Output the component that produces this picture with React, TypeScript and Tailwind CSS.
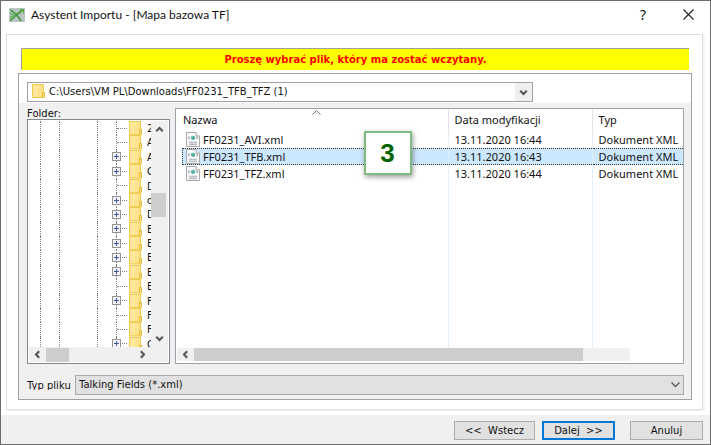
import React from "react";

const ui = "font-['Noto_Sans','Open_Sans',sans-serif]";

const folders = [
  { name: "2", plus: false },
  { name: "A", plus: false },
  { name: "A", plus: true },
  { name: "C", plus: true },
  { name: "D", plus: false },
  { name: "d", plus: true },
  { name: "D", plus: true },
  { name: "E", plus: true },
  { name: "E", plus: true },
  { name: "E", plus: true },
  { name: "E", plus: true },
  { name: "E", plus: false },
  { name: "F", plus: true },
  { name: "F", plus: false },
  { name: "F", plus: false },
  { name: "C", plus: true },
];

const files = [
  { name: "FF0231_AVI.xml", date: "13.11.2020 16:44", type: "Dokument XML", selected: false },
  { name: "FF0231_TFB.xml", date: "13.11.2020 16:43", type: "Dokument XML", selected: true },
  { name: "FF0231_TFZ.xml", date: "13.11.2020 16:44", type: "Dokument XML", selected: false },
];

function Chevron({ className = "", thin = false }: { className?: string; thin?: boolean }) {
  return (
    <svg className={className} width="9" height="9" viewBox="0 0 9 9" fill="none" stroke="#555" strokeWidth={thin ? 1.3 : 2.1} aria-hidden="true">
      <path d={thin ? "M0.5 2.5 4.5 6.5 8.5 2.5" : "M1.2 2.8 4.5 6 7.8 2.8"} />
    </svg>
  );
}

function FolderIcon() {
  return (
    <svg className="block h-full w-[13px] shrink-0" viewBox="0 0 13 14" preserveAspectRatio="none" aria-hidden="true">
      <path d="M0.5 0.5H11.5V8.5H12.5V13.5H0.5Z" fill="#ffe28c" stroke="#ecc94d" />
      <path d="M1 1H8L4 13H1Z" fill="#ffecaa" opacity=".5" />
      <path d="M10.5 13.5V8.5H12.5V13.5" fill="#ffe089" stroke="#e3bb38" />
    </svg>
  );
}

function XmlIcon() {
  return (
    <svg className="block shrink-0" width="14" height="15" viewBox="0 0 14 15" aria-hidden="true">
      <path d="M0.5 0.5H10L13.5 4V14.5H0.5Z" fill="#fafafa" stroke="#a8a8a8" />
      <path d="M10 0.5V4H13.5" fill="#fff" stroke="#a8a8a8" />
      <circle cx="7" cy="5.8" r="2" fill="#2f9c95" />
      <circle cx="6.5" cy="5.2" r="0.9" fill="#7fd6b0" />
      <path d="M3.4 4.6 2.4 5.8 3.4 7M10.6 4.6 11.6 5.8 10.6 7" fill="none" stroke="#67758f" />
      <path d="M3 10.5H11M3 12.5H11" stroke="#b9bcc6" strokeWidth="1.4" />
    </svg>
  );
}

function PlusBox() {
  return (
    <svg className="block" width="9" height="9" viewBox="0 0 9 9" aria-hidden="true">
      <rect x="0.5" y="0.5" width="8" height="8" fill="#f5f5f5" stroke="#949494" />
      <path d="M2 4.5H7M4.5 2V7" stroke="#3c59a8" />
    </svg>
  );
}

function TreeGuide({ className }: { className: string }) {
  return <span className={`${className} shrink-0 border-r border-dotted border-[#808080]`} />;
}

export default function App() {
  return (
    <div className={`${ui} flex w-full flex-col border border-[#6d6d6d] bg-white text-[11px] leading-4 text-[#111]`}>
      <header className="flex h-[33px] items-center pr-4 pb-[6px] pl-2">
        <svg width="16" height="14" viewBox="0 0 16 14" aria-hidden="true">
          <rect width="16" height="14" fill="#b9c4c4" />
          <path d="M1.5 2C5 4 9 8 12 13M1 12.5C5 10 8 5 14 2" fill="none" stroke="#3f9a3a" strokeWidth="1.5" />
          <path d="M1 5 5 7.5 1 9.5M10.5 1.5H14.5V5.5M9 6 11.5 5" fill="none" stroke="#54b046" strokeWidth="1.1" />
        </svg>
        <h1 className="ml-[6px] flex-1 font-['Lato',sans-serif] text-[12px]">Asystent Importu - [Mapa bazowa TF]</h1>
        <button type="button" aria-label="Pomoc" className="w-4 text-[14px] leading-4">?</button>
        <button type="button" aria-label="Zamknij" className="ml-8">
          <svg width="11" height="11" viewBox="0 0 11 11" fill="none" stroke="#222" strokeWidth="1.1" aria-hidden="true">
            <path d="M0.5 0.5 10.5 10.5M10.5 0.5 0.5 10.5" />
          </svg>
        </button>
      </header>

      <main className="mr-[7px] mb-[5px] ml-[5px] border border-[#dcdcdc] pt-[13px] pr-[10px] pb-[9px] pl-[9px] shadow-[2px_1px_0_#f4f4f4]">
        <p className="mr-[3px] ml-[5px] h-[22px] border-t border-l border-[#a0a0a0] bg-[#ff0] text-center font-['DejaVu_Sans',sans-serif] text-[10px] leading-[22px] font-bold text-[#f00]">
          Proszę wybrać plik, który ma zostać wczytany.
        </p>

        <section className="mt-[3px] ml-[2px] border border-[#a0a0a0] bg-[#f0f0f0]">
          <div className="bg-white px-2 pt-2 pb-px">
            <div className="relative h-5 w-[506px] max-w-full">
              <select aria-label="Ścieżka" className="block h-full w-full appearance-none border border-[#a0a0a8] bg-white pl-[21px] font-['DejaVu_Sans',sans-serif] text-[10px] leading-[18px]">
                <option>C:\Users\VM PL\Downloads\FF0231_TFB_TFZ (1)</option>
              </select>
              <span className="pointer-events-none absolute top-[2px] left-[5px] h-[14px]"><FolderIcon /></span>
              <span className="pointer-events-none absolute top-px right-px flex h-[18px] w-[17px] items-center justify-center bg-[#efefef]"><Chevron /></span>
            </div>
          </div>

          <div className="flex items-stretch gap-[5px] pt-[5px] pr-[7px] pl-2">
            <div className="flex w-[143px] shrink-0 flex-col">
              <h2 id="tree-label" className="h-[11px] font-['DejaVu_Sans',sans-serif] text-[10px] leading-[12px]">Folder:</h2>
              <div className="h-[245px] border border-[#828790] bg-white p-px">
                <div className="flex h-[226px]">
                  <ul aria-labelledby="tree-label" className="h-full flex-1 overflow-hidden">
                    <li className="flex h-[230px] flex-col">
                      {folders.map((f, i) => (
                        <div key={i} className="flex min-h-0 flex-1 items-stretch">
                          <TreeGuide className="w-3" />
                          <TreeGuide className="w-[19px]" />
                          <TreeGuide className="w-[38px]" />
                          <TreeGuide className="w-[19px]" />
                          <span className="relative mr-[2px] flex w-[10px] shrink-0 items-center">
                            <span className="w-full border-t border-dotted border-[#808080]" />
                            {f.plus && (
                              <button type="button" aria-label={`Rozwiń ${f.name}`} className="absolute -left-[5px]">
                                <PlusBox />
                              </button>
                            )}
                          </span>
                          <FolderIcon />
                          <span className="ml-[5px] w-1 shrink-0 overflow-hidden font-['DejaVu_Sans',sans-serif] text-[10px] leading-[15px]">{f.name}</span>
                        </div>
                      ))}
                    </li>
                  </ul>
                  <div className="flex w-[17px] flex-col items-center bg-[#f0f0f0] pt-1 pb-1">
                    <Chevron className="rotate-180" />
                    <span className="mt-[59px] h-6 w-[15px] self-start bg-[#cdcdcd]" />
                    <Chevron className="mt-auto" />
                  </div>
                </div>
                <div className="flex h-[15px] items-center bg-[#f0f0f0] pl-1">
                  <Chevron className="rotate-90" />
                  <span className="ml-1 h-[14px] w-[23px] bg-[#cdcdcd]" />
                  <Chevron className="mr-[21px] ml-auto -rotate-90" />
                </div>
              </div>
            </div>

            <div className="relative flex min-w-0 flex-1 flex-col border border-[#a0a0a8] bg-white">
              <table className="h-[239px] w-full table-fixed border-collapse text-left">
                <colgroup>
                  <col />
                  <col className="w-[144px]" />
                  <col className="w-[91px]" />
                </colgroup>
                <thead>
                  <tr className="h-[22px]">
                    <th scope="col" className="relative p-0 pl-[7px] font-normal">
                      <svg className="absolute top-px left-1/2" width="9" height="5" viewBox="0 0 9 5" fill="none" stroke="#777" aria-hidden="true">
                        <path d="M0.5 4.5 4.5 0.7 8.5 4.5" />
                      </svg>
                      Nazwa
                    </th>
                    <th scope="col" className="border-l border-[#e2e2e2] p-0 pl-[6px] font-normal">Data modyfikacji</th>
                    <th scope="col" className="border-l border-[#e2e2e2] p-0 pl-[6px] font-normal">Typ</th>
                  </tr>
                </thead>
                <tbody>
                  {files.map((f) => (
                    <tr key={f.name} className="h-[17px]">
                      <td className="p-0 pl-[6px]">
                        <div className={f.selected ? "flex h-[17px] items-center border-y border-l border-dotted border-[#333] bg-[#cce8ff] pl-[3px]" : "flex h-[17px] items-center pl-1"}>
                          <XmlIcon />
                          <span className="ml-[3px]">{f.name}</span>
                        </div>
                      </td>
                      {[f.date, f.type].map((text) => (
                        <td key={text} className={f.selected ? "border-l border-[#e2eefb] bg-[#cce8ff] p-0" : "border-l border-[#e2eefb] p-0"}>
                          <div className={f.selected ? "h-[17px] border-y border-dotted border-[#333] pl-[6px] leading-[15px] whitespace-nowrap" : "h-[17px] pl-[6px] leading-[17px] whitespace-nowrap"}>{text}</div>
                        </td>
                      ))}
                    </tr>
                  ))}
                  <tr>
                    <td />
                    <td className="border-l border-[#e2eefb]" />
                    <td className="border-l border-[#e2eefb]" />
                  </tr>
                </tbody>
              </table>
              <div className="mr-[53px] ml-px flex h-[13px] items-center bg-[#f0f0f0] pl-1">
                <Chevron className="rotate-90" />
                <span className="ml-1 h-full grow bg-[#cdcdcd]" />
                <span className="w-[47px]" />
              </div>
              <div className="absolute top-[22px] left-[188px] flex h-[44px] w-[48px] items-center justify-center border-2 border-[#7fba80] bg-white pr-px font-['Liberation_Sans',Arial,sans-serif] text-[26px] leading-none font-bold text-[#006400] shadow-[1px_2px_5px_rgba(0,0,0,0.4)]">
                3
              </div>
            </div>
          </div>

          <div className="flex items-center pt-[11px] pr-[7px] pb-1 pl-2">
            <label htmlFor="file-type" className="h-[9px] w-12 shrink-0 overflow-hidden font-['DejaVu_Sans',sans-serif] text-[10px] leading-[10px] whitespace-nowrap">Typ pliku</label>
            <div className="relative h-5 flex-1">
              <select id="file-type" className="block h-full w-full appearance-none border border-[#a8a8a8] bg-[#e1e1e1] pl-[3px] font-['DejaVu_Sans',sans-serif] text-[10px] leading-[18px]">
                <option>Talking Fields (*.xml)</option>
              </select>
              <Chevron thin className="pointer-events-none absolute top-[5px] right-1" />
            </div>
          </div>
        </section>
      </main>

      <footer className="flex h-[29px] items-start justify-end bg-[#f0f0f0] pt-[6px] pr-[7px] font-['DejaVu_Sans',sans-serif] text-[10px] leading-4">
        <button type="button" className="h-[19px] w-[81px] border border-[#adadad] bg-[#e1e1e1] whitespace-pre">{"<<  Wstecz"}</button>
        <button type="button" className="ml-[7px] h-[19px] w-[73px] border-2 border-[#0078d7] bg-[#e1e1e1] leading-[14px] whitespace-pre">{"Dalej  >>"}</button>
        <button type="button" className="ml-[15px] h-[19px] w-[73px] border border-[#adadad] bg-[#e1e1e1]">Anuluj</button>
      </footer>
    </div>
  );
}
